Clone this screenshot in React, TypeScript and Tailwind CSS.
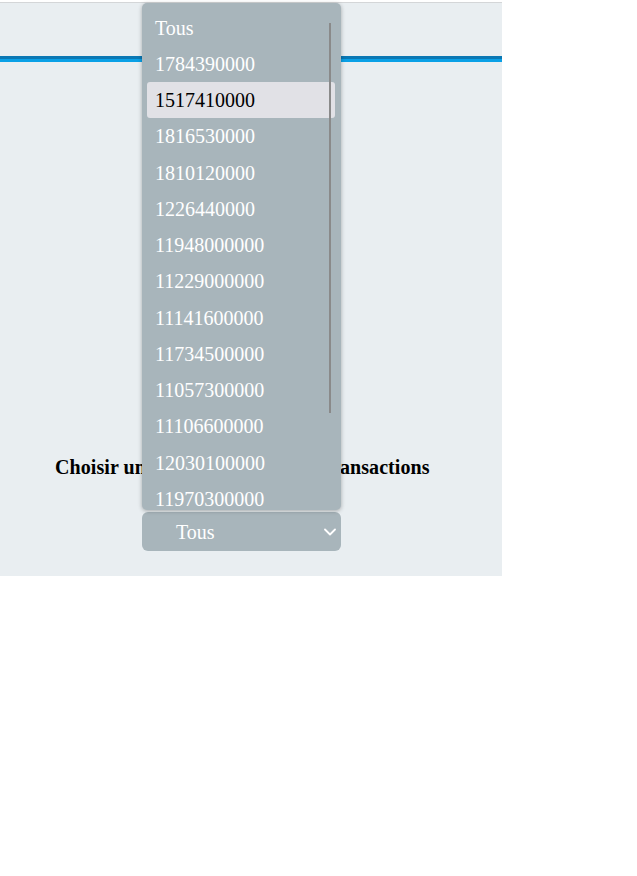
import React from "react";

const items = [
  "Tous",
  "1784390000",
  "1517410000",
  "1816530000",
  "1810120000",
  "1226440000",
  "11948000000",
  "11229000000",
  "11141600000",
  "11734500000",
  "11057300000",
  "11106600000",
  "12030100000",
  "11970300000",
  "11500200000",
];

export default function App() {
  return (
    <div className="w-[637px] h-[876px] bg-white" style={{ fontFamily: '"Liberation Serif", serif' }}>
      <div className="h-[2px] bg-white" />
      <div className="relative w-[502px] h-[574px] bg-[#e9eef1] border-t border-[#d4d6d8]">
        <div className="h-[53px]" />
        <div className="h-[3px] bg-[#0a78b4]" />
        <div className="h-[3px] bg-[#0aa0e6]" />
        <div className="h-[387px]" />
        <div className="pl-[55px] h-[36px] flex items-center">
          <h2 className="text-[20px] font-bold text-black whitespace-nowrap leading-none tracking-[0.08px]">
            Choisir une carte pour voir ses transactions
          </h2>
        </div>
        <div className="pl-[142px] pt-[27px]">
          <div className="w-[199px] h-[39px] rounded-[6px] bg-[#a8b5bb] flex items-center justify-between pl-[34px] pr-[5px]">
            <span className="text-[20px] text-white">Tous</span>
            <svg width="12" height="8" viewBox="0 0 12 8" fill="none">
              <path d="M1 1.5 L6 6.5 L11 1.5" stroke="white" strokeWidth="1.8" strokeLinecap="round" strokeLinejoin="round" />
            </svg>
          </div>
        </div>

        <div className="absolute left-[142px] top-0 w-[199px] h-[507px] rounded-[5px] bg-[#a8b5bb] shadow-[0_1px_4px_rgba(0,0,0,0.3)] overflow-hidden">
          <div className="pt-[6px] px-[5px]">
            {items.map((it, i) => (
              <div
                key={it + i}
                className={
                  "h-[36.25px] flex items-center pl-[8px] pt-[1px] rounded-[3px] text-[20px] " +
                  (i === 2 ? "bg-[#e1e1e6] text-black w-[188px]" : "text-white")
                }
              >
                {it}
              </div>
            ))}
          </div>
          <div className="absolute left-[187px] top-[20px] w-[2px] h-[390px] bg-[#8a8a8a]" />
        </div>
      </div>
    </div>
  );
}
